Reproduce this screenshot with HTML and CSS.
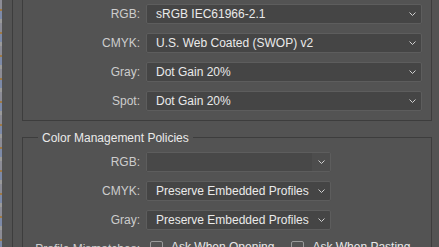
FILE: index.html
```html
<!DOCTYPE html>
<html lang="en">
  <head>
    <meta charset="UTF-8" />
    <title>Color Settings</title>
    <link rel="stylesheet" href="styles.css">
  </head>
  <body>
    <div class="screen">
      <div class="edge"></div>
      <div class="dialog">
        <!-- WORKING SPACES -->
        <div class="group spaces">
          <label class="lbl">RGB:</label>
          <div class="select"><span>sRGB IEC61966-2.1</span><i class="arrow"><svg width="7" height="4" viewBox="0 0 7 4"><polyline points="0.5,0.5 3.5,3.5 6.5,0.5" /></svg></i></div>
          <label class="lbl">CMYK:</label>
          <div class="select"><span>U.S. Web Coated (SWOP) v2</span><i class="arrow"><svg width="7" height="4" viewBox="0 0 7 4"><polyline points="0.5,0.5 3.5,3.5 6.5,0.5" /></svg></i></div>
          <label class="lbl">Gray:</label>
          <div class="select"><span>Dot Gain 20%</span><i class="arrow"><svg width="7" height="4" viewBox="0 0 7 4"><polyline points="0.5,0.5 3.5,3.5 6.5,0.5" /></svg></i></div>
          <label class="lbl">Spot:</label>
          <div class="select"><span>Dot Gain 20%</span><i class="arrow"><svg width="7" height="4" viewBox="0 0 7 4"><polyline points="0.5,0.5 3.5,3.5 6.5,0.5" /></svg></i></div>
        </div>

        <!-- COLOR MANAGEMENT POLICIES -->
        <div class="group policies">
          <div class="title">Color Management Policies</div>
          <div class="rows">
            <label class="lbl">RGB:</label>
            <div class="select disabled"><span></span><i class="arrow"><svg width="7" height="4" viewBox="0 0 7 4"><polyline points="0.5,0.5 3.5,3.5 6.5,0.5" /></svg></i></div>
            <label class="lbl">CMYK:</label>
            <div class="select"><span>Preserve Embedded Profiles</span><i class="arrow"><svg width="7" height="4" viewBox="0 0 7 4"><polyline points="0.5,0.5 3.5,3.5 6.5,0.5" /></svg></i></div>
            <label class="lbl">Gray:</label>
            <div class="select"><span>Preserve Embedded Profiles</span><i class="arrow"><svg width="7" height="4" viewBox="0 0 7 4"><polyline points="0.5,0.5 3.5,3.5 6.5,0.5" /></svg></i></div>
            <label class="lbl">Profile Mismatches:</label>
            <div class="checks">
              <span class="check"><i class="box"></i>Ask When Opening</span>
              <span class="check"><i class="box"></i>Ask When Pasting</span>
            </div>
          </div>
        </div>
      </div>
    </div>
  </body>
</html>
```

FILE: styles.css
```css
:root {
  --bg: #535353;
  --field: #454545;
  --field-border: #5d5d5d;
  --line: #3d3d3d;
  --text: #eaeaea;
  --label: #cdcdcd;
}

* {
  box-sizing: border-box;
  font-family: "Liberation Sans", Arial, sans-serif;
}

body {
  margin: 0;
  background: var(--bg);
  overflow: hidden;
}

.screen {
  display: flex;
  height: 247px;
}

/* bit of the window behind */
.edge {
  width: 2px;
  background: repeating-linear-gradient(180deg, #8c8c96 0 9px, #a07a45 9px 11px, #7d8aa8 11px 19px, #9a9a9a 19px 23px);
}

.dialog {
  flex: 1;
  margin-left: 10px;
  border-left: 1px solid var(--line);
  padding: 0 7px 0 9px;
}

/* ───── GROUPS ───── */
.group {
  border: 1px solid var(--line);
}

.spaces {
  border-top: none;
  display: grid;
  grid-template-columns: 117px 1fr;
  grid-auto-rows: 20px;
  column-gap: 6px;
  row-gap: 9px;
  padding: 4px 9px 9px 0;
}

.policies {
  margin-top: 16px;
  border-bottom: none;
  height: 200px;
}

.title {
  width: fit-content;
  margin: -8px 0 0 15px;
  padding: 0 4px;
  background: var(--bg);
  font-size: 12px;
  line-height: 16px;
  color: var(--text);
}

.rows {
  margin-top: 6px;
  display: grid;
  grid-template-columns: 117px 185px;
  grid-auto-rows: 20px;
  column-gap: 6px;
  row-gap: 9px;
}

.lbl {
  text-align: right;
  white-space: nowrap;
  font-size: 12px;
  color: var(--label);
  align-self: center;
}

/* ───── DROPDOWNS ───── */
.select {
  display: flex;
  align-items: center;
  background: var(--field);
  border: 1px solid var(--field-border);
  border-radius: 2px;
  font-size: 12px;
  color: var(--text);
}

.select span {
  flex: 1;
  padding-left: 9px;
  white-space: nowrap;
  overflow: hidden;
}

.arrow {
  width: 18px;
  height: 100%;
  display: flex;
  align-items: center;
  justify-content: center;
}

.arrow svg polyline {
  fill: none;
  stroke: #d0d0d0;
  stroke-width: 1;
}

.disabled span {
  align-self: stretch;
  background: #484848;
}
.disabled .arrow { background: #4d4d4d; }

/* ───── CHECKBOXES ───── */
.checks {
  display: flex;
  gap: 17px;
  padding-left: 4px;
  align-items: flex-start;
  font-size: 12px;
  color: var(--text);
}

.check {
  display: flex;
  align-items: flex-start;
  gap: 8px;
  line-height: 17px;
  white-space: nowrap;
}

.box {
  flex: none;
  width: 13px;
  height: 13px;
  margin-top: 2px;
  border: 1px solid #9a9a9a;
  border-radius: 2px;
}
```
